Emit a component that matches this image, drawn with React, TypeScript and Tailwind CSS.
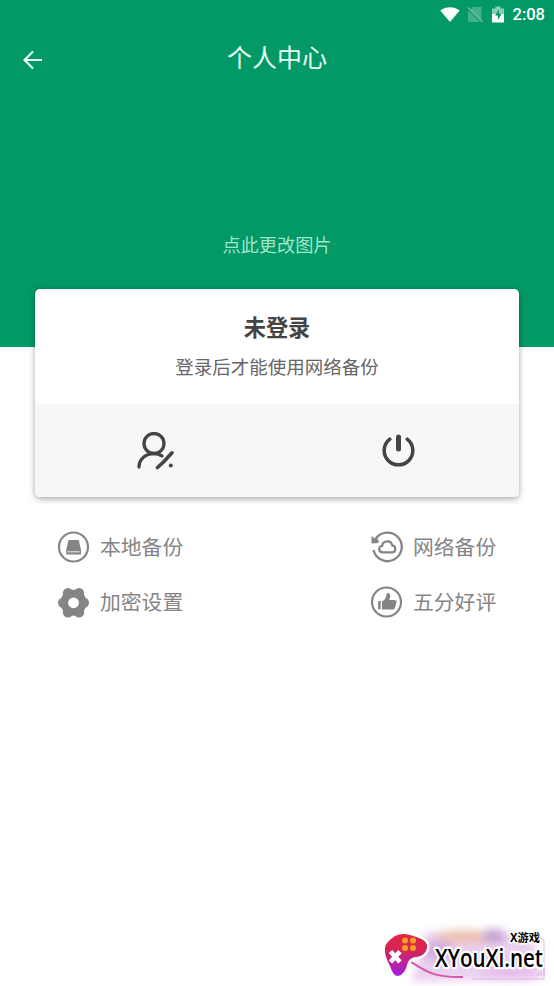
import React from 'react';

function StatusBar() {
  return (
    <div className="flex h-7 items-center justify-end pr-[9px] text-white">
      <svg className="h-[15px] w-5" viewBox="0 0 20 15">
        <path d="M0.3 3.6C5.8-.9 14.200-.9 19.700 3.600L10 15Z" fill="currentColor" />
      </svg>
      <svg className="ml-[7px] h-[17px] w-4" viewBox="0 0 16 17">
        <path d="M6 1h8.500v15H1V6Z" fill="#47ae8b" />
        <path d="M0 1.500 15 16.500" stroke="#029966" strokeWidth="2.200" />
        <path d="M1 1.500 15.500 16" stroke="#6fc3a5" strokeWidth="1.300" />
      </svg>
      <svg className="ml-[9px] h-[17px] w-3" viewBox="0 0 12 17">
        <path d="M0 2.500h3.500V.500h5v2H12V8H0Z" fill="#86cfb5" />
        <path d="M0 8h12v8.500H0Z" fill="white" />
        <path d="M7 3.500 3 9.500h2.800V14L9.500 8H7Z" fill="#029966" />
      </svg>
      <span className="ml-[9px] pt-px font-[Roboto,sans-serif] text-[16.500px] leading-7 font-medium">2:08</span>
    </div>
  );
}

function UserEditIcon() {
  return (
    <svg className="h-[38px] w-[38px]" viewBox="0 0 38 38" fill="none" stroke="#444" strokeWidth="3.300" strokeLinecap="round">
      <circle cx="17" cy="11.500" r="10" />
      <path d="M2 35C2 27 9 21.700 17 21.700c3.200 0 5.600.700 8 2.200" />
      <path d="M20.500 35.500 27 29.500 35 20.800" strokeWidth="3.600" />
      <circle cx="33.800" cy="33.500" r="2" fill="#444" stroke="none" />
    </svg>
  );
}

function PowerIcon() {
  return (
    <svg className="h-[34px] w-[34px]" viewBox="0 0 34 34" fill="none" stroke="#444" strokeLinecap="round">
      <path d="M8.800 5.200A14.300 14.300 0 1 0 26.200 5.200" strokeWidth="3.500" />
      <path d="M17.500 3v12" strokeWidth="5" />
    </svg>
  );
}

function DriveIcon() {
  return (
    <svg className="h-8 w-8" viewBox="0 0 32 32">
      <circle cx="15.500" cy="16" r="14.500" fill="none" stroke="#858585" strokeWidth="2.200" />
      <path d="M10.500 9h10.200L23 19H8.200Z" fill="#858585" />
      <path d="M8.200 19H23v4.500H8.200Z" fill="#858585" />
      <path d="M9.500 20.800h12.200" stroke="white" strokeWidth="1" strokeDasharray="3 .4" />
    </svg>
  );
}

function CloudIcon() {
  return (
    <svg className="h-8 w-8" viewBox="0 0 32 32" fill="none" stroke="#858585" strokeWidth="2.300">
      <path d="M4.500 8A14.300 14.300 0 1 1 2.500 19" />
      <path d="M.500 5V12.500l7-.5V8.500l-3-.5Z" fill="#858585" stroke="none" />
      <path d="M12 21.300c-5 0-5.100-6.300-.8-6.500.5-5.600 9.200-5.800 9.900-.5 4.200.2 4.300 7-.1 7Z" strokeWidth="2.200" />
    </svg>
  );
}

function GearIcon() {
  return (
    <svg className="h-8 w-8" viewBox="0 0 32 32">
      <g transform="translate(-.5 .8)" fill="#858585">
        <circle cx="16" cy="16" r="13" />
        <circle cx="26.200" cy="16" r="5.300" />
        <circle cx="21.500" cy="6.400" r="5.200" />
        <circle cx="10.500" cy="6.400" r="5.200" />
        <circle cx="5.800" cy="16" r="5.300" />
        <circle cx="10.500" cy="25.600" r="5.200" />
        <circle cx="21.500" cy="25.600" r="5.200" />
        <circle cx="16" cy="16" r="5.400" fill="white" />
      </g>
    </svg>
  );
}

function ThumbIcon() {
  return (
    <svg className="h-8 w-8" viewBox="0 0 32 32">
      <circle cx="15.500" cy="16" r="14.500" fill="none" stroke="#858585" strokeWidth="2.200" />
      <path d="M7.200 15h2.500v8.300H7.200Z" fill="#858585" />
      <path d="M11 15.500c2.500-1 4-3.200 4.400-6.500.300-2.900 3.800-2.500 3.800.7 0 1.700-.5 3.200-.9 4.300h5c1.700 0 2.600 1 2.200 2.500l-1.400 5.100c-.4 1.400-1.200 2-2.600 2H11Z" fill="#858585" />
    </svg>
  );
}

function MenuItem({ icon, label }: { icon: React.ReactNode; label: string }) {
  return (
    <button className="flex h-[55px] items-center gap-[10.500px] text-[20.800px] whitespace-nowrap text-[#858585]">
      {icon}
      <span className="pb-[2px] leading-[30px]">{label}</span>
    </button>
  );
}

function Watermark() {
  return (
    <svg className="absolute right-0 bottom-0 h-[70px] w-[180px] overflow-visible" viewBox="0 0 180 70">
      <defs>
        <filter id="haze" x="-20%" y="-50%" width="140%" height="200%">
          <feGaussianBlur stdDeviation="4.500" />
        </filter>
        <linearGradient id="pad" x1="0" y1="0" x2="0" y2="1">
          <stop offset="0" stopColor="#e32545" />
          <stop offset=".4" stopColor="#d32557" />
          <stop offset="1" stopColor="#a31de5" />
        </linearGradient>
      </defs>
      <g filter="url(#haze)">
        <path d="M50 17H125L160 24 168 62 38 66Z" fill="#ead0f0" />
        <ellipse cx="91" cy="21" rx="32" ry="7" fill="#edc0b2" />
        <ellipse cx="64" cy="35" rx="16" ry="11" fill="#d5b0e5" />
        <ellipse cx="120" cy="20" rx="12" ry="7" fill="#c3a0d2" />
        <ellipse cx="137" cy="58" rx="32" ry="6" fill="#e3b9e9" />
      </g>
      <path d="M34 44C50 54 58 62 89 61" fill="none" stroke="#d855ae" strokeWidth="2" />
      <path d="M98 63h72V26q0-4-4-4" fill="none" stroke="#dfb9e3" strokeWidth="1" />
      <path d="M164 60v-3m3 3v-5m3 5v-7" stroke="#dda5d8" strokeWidth="1" />
      <path
        d="M13 27Q21 17 31 18Q38 19 45 22Q54 25 53 32Q52 39 43 41Q37 41 34 46Q31 59 24 60Q19 60 16 50Q10 39 11 32Q11 29 13 27Z"
        fill="url(#pad)" stroke="white" strokeWidth="5" paintOrder="stroke"
      />
      <g fill="#f9a11f">
        <circle cx="31" cy="24.500" r="3" /><circle cx="39" cy="24.500" r="3" />
        <circle cx="31" cy="32" r="3" /><circle cx="39" cy="32" r="3" />
      </g>
      <path d="M16.500 35.500 26 46M26 35.500 16.500 46" stroke="white" strokeWidth="4.800" />
      <g fill="black" stroke="white" strokeWidth="4.500" strokeLinejoin="round" paintOrder="stroke">
        <text x="61" y="50.500" fontSize="25" fontWeight="650" fontFamily="Open Sans, Noto Sans, sans-serif" textLength="108" lengthAdjust="spacingAndGlyphs">XYouXi.net</text>
        <text x="136" y="26" fontSize="11.500" fontWeight="700" strokeWidth="3" fontFamily="Noto Sans, Noto Sans CJK SC, sans-serif" textLength="30" lengthAdjust="spacingAndGlyphs">X游戏</text>
      </g>
    </svg>
  );
}

export default function App() {
  return (
    <div className="relative flex h-[986px] w-full flex-col overflow-hidden bg-white font-['Noto_Sans_CJK_SC',sans-serif]">
      <header className="flex h-[347px] shrink-0 flex-col bg-[#029966]">
        <StatusBar />
        <div className="grid h-[60px] grid-cols-[64px_1fr_64px] items-center text-[#e8fff6]">
          <button className="flex pt-1 pl-[23px]" aria-label="返回">
            <svg className="h-5 w-5" viewBox="0 0 20 20" fill="none" stroke="currentColor" strokeWidth="2.200">
              <path d="M19 10H2M10 1.500 1.500 10 10 18.500" />
            </svg>
          </button>
          <h1 className="pb-1 text-center text-[25px] leading-9">个人中心</h1>
        </div>
        <p className="mt-[142px] text-center text-[18.200px] leading-7 text-[#a0e4c7]">点此更改图片</p>
      </header>
      <section className="mx-[35px] -mt-[58px] flex h-[208px] shrink-0 flex-col overflow-hidden rounded-[5px] bg-white shadow-[0_2px_6px_rgba(0,0,0,0.35)]">
        <div className="flex h-[115px] flex-col items-center pt-[21px]">
          <h2 className="text-[22.200px] leading-8 font-bold text-[#444]">未登录</h2>
          <p className="mt-[10px] text-[18.500px] leading-7 text-[#666]">登录后才能使用网络备份</p>
        </div>
        <div className="grid flex-1 grid-cols-2 place-items-center bg-[#f7f7f7]">
          <button aria-label="编辑用户"><UserEditIcon /></button>
          <button aria-label="退出"><PowerIcon /></button>
        </div>
      </section>
      <nav className="mt-[22px] grid grid-cols-[313px_auto] justify-start pl-[57.500px]">
        <MenuItem icon={<DriveIcon />} label="本地备份" />
        <MenuItem icon={<CloudIcon />} label="网络备份" />
        <MenuItem icon={<GearIcon />} label="加密设置" />
        <MenuItem icon={<ThumbIcon />} label="五分好评" />
      </nav>
      <Watermark />
    </div>
  );
}
